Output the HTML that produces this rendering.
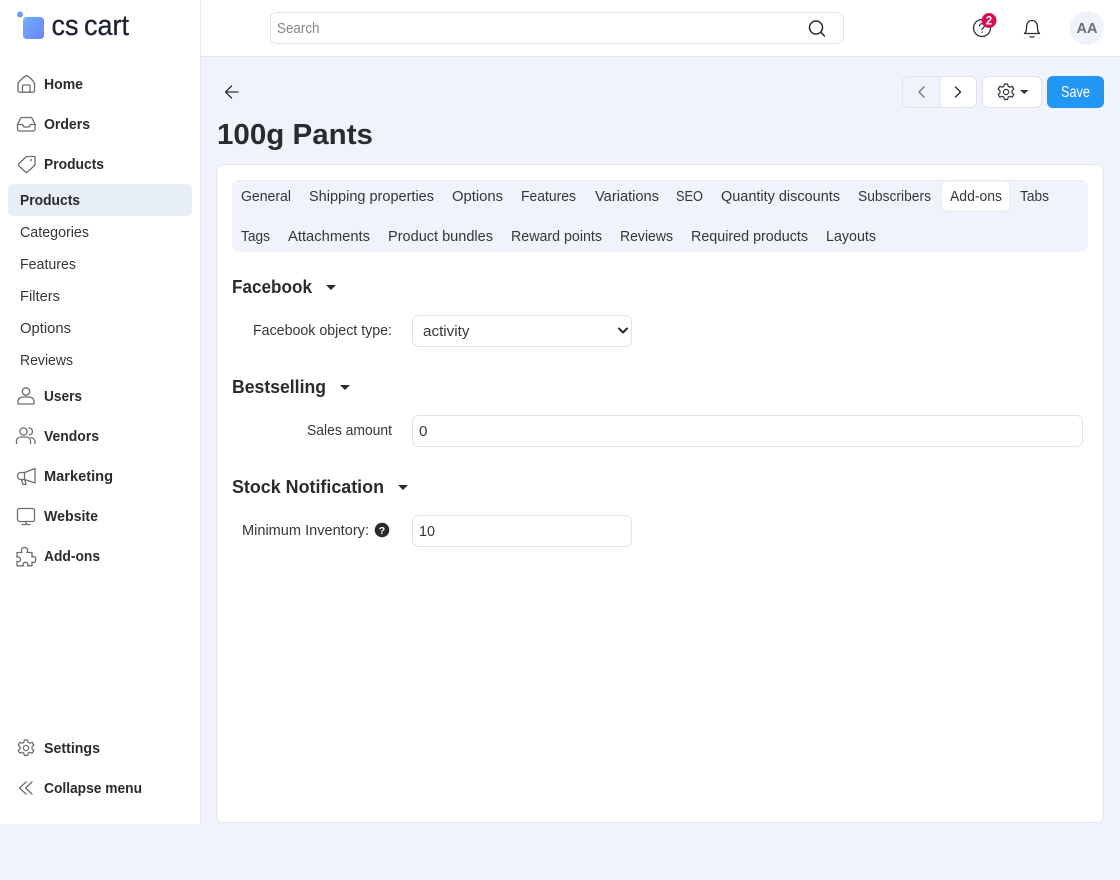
<!DOCTYPE html>
<html lang="en"><head><meta charset="utf-8"><title>100g Pants</title>
<style>
html,body{margin:0;padding:0;width:1120px;height:880px;overflow:hidden;background:#f0f3fb}
svg{display:block;font-family:"Liberation Sans",sans-serif}
.b{font-weight:700;font-size:14.5px;fill:#292b2f}
.r{font-size:14.5px;fill:#33363b}
.h{font-weight:700;font-size:18.5px;fill:#292b2f}
.i{fill:none;stroke:#6b6d70;stroke-width:1.3;stroke-linecap:round;stroke-linejoin:round}
.d{fill:none;stroke:#26282c;stroke-width:1.5;stroke-linecap:round;stroke-linejoin:round}
</style></head><body>
<svg width="1120" height="880" viewBox="0 0 1120 880" xmlns="http://www.w3.org/2000/svg">
<defs><linearGradient id="g" x1="0" y1="0" x2="1" y2="1"><stop offset="0" stop-color="#6fb0fb"/><stop offset="1" stop-color="#6c83fb"/></linearGradient></defs>
<rect width="1120" height="880" fill="#f0f3fb"/>
<!-- sidebar -->
<rect width="200.5" height="824" fill="#fff"/>
<rect x="200" width="1" height="824" fill="#e6e9f0"/>
<!-- top bar -->
<rect x="201" width="919" height="56" fill="#fff"/>
<rect x="201" y="56" width="919" height="1" fill="#e3e6ee"/>
<!-- logo -->
<circle cx="20" cy="14.5" r="3" fill="#6f9cfb"/>
<rect x="23" y="17" width="21" height="22" rx="3.5" fill="url(#g)"/>
<text x="51.500" y="35" font-size="29" fill="#1e2233" stroke="#1e2233" stroke-width=".3" textLength="27" lengthAdjust="spacingAndGlyphs">cs</text>
<text x="84" y="35" font-size="29" fill="#1e2233" stroke="#1e2233" stroke-width=".3" textLength="45" lengthAdjust="spacingAndGlyphs">cart</text>
<!-- sidebar active -->
<rect x="8" y="184" width="184" height="32" rx="6" fill="#e8eef7"/>
<!-- sidebar text -->
<text class="b" x="44" y="89" textLength="39" lengthAdjust="spacingAndGlyphs">Home</text>
<text class="b" x="44" y="129" textLength="46" lengthAdjust="spacingAndGlyphs">Orders</text>
<text class="b" x="44" y="169" textLength="60" lengthAdjust="spacingAndGlyphs">Products</text>
<text class="b" x="20" y="205" textLength="60" lengthAdjust="spacingAndGlyphs">Products</text>
<text class="r" x="20" y="237" textLength="69" lengthAdjust="spacingAndGlyphs">Categories</text>
<text class="r" x="20" y="269" textLength="56" lengthAdjust="spacingAndGlyphs">Features</text>
<text class="r" x="20" y="301" textLength="40" lengthAdjust="spacingAndGlyphs">Filters</text>
<text class="r" x="20" y="333" textLength="51" lengthAdjust="spacingAndGlyphs">Options</text>
<text class="r" x="20" y="365" textLength="53" lengthAdjust="spacingAndGlyphs">Reviews</text>
<text class="b" x="44" y="401" textLength="38" lengthAdjust="spacingAndGlyphs">Users</text>
<text class="b" x="44" y="441" textLength="55" lengthAdjust="spacingAndGlyphs">Vendors</text>
<text class="b" x="44" y="481" textLength="69" lengthAdjust="spacingAndGlyphs">Marketing</text>
<text class="b" x="44" y="521" textLength="54" lengthAdjust="spacingAndGlyphs">Website</text>
<text class="b" x="44" y="561" textLength="56" lengthAdjust="spacingAndGlyphs">Add-ons</text>
<text class="b" x="44" y="753" textLength="56" lengthAdjust="spacingAndGlyphs">Settings</text>
<text class="b" x="44" y="793" textLength="98" lengthAdjust="spacingAndGlyphs">Collapse menu</text>
<!-- sidebar icons -->
<path class="i" d="M18 83.500C19.500 81 23 77 26.500 75.500 30 77 33.500 81 34.500 83.500V90.500a1.700 1.700 0 0 1-1.700 1.700H19.700A1.700 1.700 0 0 1 18 90.500zM22.500 92.200V86a1 1 0 0 1 1-1h5.500a1 1 0 0 1 1 1v6.200"/>
<path class="i" d="M17.500 124.500l3-6.200a1.500 1.500 0 0 1 1.300-.8h9a1.500 1.500 0 0 1 1.300.8l3 6.200v4.500a2 2 0 0 1-2 2H19.500a2 2 0 0 1-2-2zM17.500 124.500H22.500l1.500 2.500h5l1.500-2.500h5"/>
<path class="i" d="M19 163.500L26.500 156.500H34a1 1 0 0 1 1 1V165L27.500 172a1.500 1.500 0 0 1-2 0L19 166a1.700 1.700 0 0 1 0-2.500z"/><circle cx="31" cy="160" r="1" fill="#6b6d70"/>
<circle class="i" cx="26" cy="391.500" r="3.700"/><path class="i" d="M18 404v-2.500c0-3 2.500-4.500 5-4.500h6c2.500 0 5 1.500 5 4.500V404z"/>
<circle class="i" cx="23.500" cy="431.500" r="3.600"/><path class="i" d="M16.500 443.500v-2c0-3 2-4.500 4.500-4.500h5c2.500 0 4.500 1.500 4.500 4.500v2M29 428c2.500.5 3.500 2 3.500 3.500s-1 3-3 3.500M31 437.500c2 .5 4 2 4 4v2"/>
<path class="i" d="M35 468.500V483L24.500 479.500H21a3.500 3.500 0 0 1 0-7h3.500zM24.500 472.500v7M21.500 480l1.500 4.500h3l-1-4"/>
<rect class="i" x="17.500" y="508.500" width="17" height="13" rx="2"/><path class="i" d="M26 521.500v3M22 524.500h8"/>
<path class="i" d="M17 552.500h5c-1.500-3 0-5 2.500-5s4 2 2.500 5h5v4.500c2-1.200 3.800 0 3.800 2.500s-1.800 3.700-3.800 2.500v3.800h-4.500c1-2.500-.5-3.500-2-3.500s-3 1-2 3.500H17v-4.500c2.500 1 3.500-.5 3.500-2s-1-3-3.500-2z"/>
<circle class="i" cx="26" cy="748" r="2.600"/><path class="i" d="M24.400 740h3.200l.6 2.400 1.700.8 2.300-.9 1.600 2.800-1.800 1.600v2.100l1.800 1.600-1.600 2.800-2.300-.9-1.700.8-.6 2.400h-3.200l-.6-2.400-1.700-.8-2.300.9-1.600-2.800 1.800-1.600v-2.100l-1.800-1.600 1.600-2.800 2.300.9 1.700-.8z"/>
<path class="i" d="M26 782l-6.500 6 6.500 6M32 782l-6.500 6 6.500 6"/>
<!-- search -->
<rect x="270.500" y="12.500" width="573" height="31" rx="6" fill="#fff" stroke="#e2e5ea"/>
<text x="277" y="33" font-size="14.5" fill="#85888c" textLength="42.500" lengthAdjust="spacingAndGlyphs">Search</text>
<circle class="d" cx="816" cy="27.500" r="6.500"/><path class="d" d="M821 32.500l3.500 3.500"/>
<!-- header right -->
<circle class="d" cx="982" cy="28" r="8.500" style="stroke:#34363a;stroke-width:1.300"/>
<path class="d" d="M979.500 26c0-3 5-3 5 0 0 1.600-2.500 1.800-2.500 3.500M982 32v.300" style="stroke:#34363a;stroke-width:1.300"/>
<circle cx="989" cy="20.500" r="7.500" fill="#d90b57"/>
<text x="989" y="24.500" text-anchor="middle" font-size="11.500" font-weight="700" fill="#fff">2</text>
<path class="d" d="M1024.500 33.500c1.500-1.500 2-2.500 2-6 0-4 2-7 5.500-7s5.500 3 5.500 7c0 3.500.5 4.500 2 6zM1030 36.500c1 .8 3 .8 4 0" style="stroke:#2a2c30;stroke-width:1.300"/>
<circle cx="1087" cy="28" r="17" fill="#f0f3fb"/>
<text x="1087" y="33" text-anchor="middle" font-size="14.500" font-weight="700" fill="#6c6f73" textLength="21" lengthAdjust="spacingAndGlyphs">AA</text>
<!-- back arrow -->
<path d="M238 92h-12.500M231.500 86l-6 6 6 6" fill="none" stroke="#2c2e32" stroke-width="1.300" stroke-linecap="round" stroke-linejoin="round"/>
<!-- title -->
<text x="217" y="144" font-size="29" font-weight="700" fill="#292b2f" textLength="156" lengthAdjust="spacingAndGlyphs">100g Pants</text>
<!-- toolbar -->
<path d="M940 76.500h-32a5.500 5.500 0 0 0-5.500 5.500v20a5.500 5.500 0 0 0 5.500 5.500h32z" fill="#f0f3fb" stroke="#e0e3ea"/>
<path d="M940 76.500h31a5.500 5.500 0 0 1 5.500 5.500v20a5.500 5.500 0 0 1-5.500 5.500h-31z" fill="#fff" stroke="#e0e3ea"/>
<path d="M924 87l-5 5 5 5" fill="none" stroke="#75787c" stroke-width="1.400" stroke-linecap="round" stroke-linejoin="round"/>
<path d="M955.500 87l5 5-5 5" fill="none" stroke="#2a2c30" stroke-width="1.400" stroke-linecap="round" stroke-linejoin="round"/>
<rect x="982.500" y="76.500" width="59" height="31" rx="6" fill="#fff" stroke="#e0e3ea"/>
<g transform="translate(-20 -656)"><circle cx="1026" cy="748" r="2.600" fill="none" stroke="#303236" stroke-width="1.200"/><path d="M1024.400 740h3.200l.6 2.400 1.700.8 2.300-.9 1.600 2.800-1.800 1.600v2.100l1.800 1.600-1.600 2.800-2.300-.9-1.700.8-.6 2.400h-3.200l-.6-2.400-1.700-.8-2.300.9-1.600-2.800 1.800-1.600v-2.100l-1.800-1.600 1.600-2.800 2.300.9 1.700-.8z" fill="none" stroke="#303236" stroke-width="1.200" stroke-linejoin="round"/></g>
<path d="M1020 90h8.500l-4.250 4z" fill="#303236"/>
<rect x="1047" y="76" width="57" height="32" rx="6" fill="#2196f3"/>
<text x="1061" y="97" font-size="15.500" fill="#fff" textLength="29" lengthAdjust="spacingAndGlyphs">Save</text>
<!-- card -->
<rect x="216.500" y="164.500" width="887" height="658" rx="6" fill="#fff" stroke="#e3e6ec"/>
<!-- tabs -->
<rect x="232" y="180" width="856" height="72" rx="6" fill="#f0f3fa"/>
<rect x="238" y="180" width="844" height="1" fill="#e6e9f0"/>
<rect x="941" y="181" width="69" height="30" rx="6" fill="#fff" stroke="#e6e9ef"/>
<text class="r" x="241" y="201" textLength="50" lengthAdjust="spacingAndGlyphs">General</text>
<text class="r" x="309" y="201" textLength="125" lengthAdjust="spacingAndGlyphs">Shipping properties</text>
<text class="r" x="452" y="201" textLength="51" lengthAdjust="spacingAndGlyphs">Options</text>
<text class="r" x="521" y="201" textLength="55" lengthAdjust="spacingAndGlyphs">Features</text>
<text class="r" x="595" y="201" textLength="64" lengthAdjust="spacingAndGlyphs">Variations</text>
<text class="r" x="676" y="201" textLength="27" lengthAdjust="spacingAndGlyphs">SEO</text>
<text class="r" x="721" y="201" textLength="119" lengthAdjust="spacingAndGlyphs">Quantity discounts</text>
<text class="r" x="858" y="201" textLength="73" lengthAdjust="spacingAndGlyphs">Subscribers</text>
<text class="r" x="950" y="201" textLength="52" lengthAdjust="spacingAndGlyphs">Add-ons</text>
<text class="r" x="1020" y="201" textLength="29" lengthAdjust="spacingAndGlyphs">Tabs</text>
<text class="r" x="241" y="241" textLength="29" lengthAdjust="spacingAndGlyphs">Tags</text>
<text class="r" x="288" y="241" textLength="82" lengthAdjust="spacingAndGlyphs">Attachments</text>
<text class="r" x="388" y="241" textLength="105" lengthAdjust="spacingAndGlyphs">Product bundles</text>
<text class="r" x="511" y="241" textLength="91" lengthAdjust="spacingAndGlyphs">Reward points</text>
<text class="r" x="620" y="241" textLength="53" lengthAdjust="spacingAndGlyphs">Reviews</text>
<text class="r" x="691" y="241" textLength="117" lengthAdjust="spacingAndGlyphs">Required products</text>
<text class="r" x="826" y="241" textLength="50" lengthAdjust="spacingAndGlyphs">Layouts</text>
<!-- sections -->
<text class="h" x="232" y="293" textLength="80" lengthAdjust="spacingAndGlyphs">Facebook</text>
<path d="M326 285h10l-5 5z" fill="#292b2f"/>
<text class="r" x="253" y="335" textLength="139" lengthAdjust="spacingAndGlyphs">Facebook object type:</text>
<rect x="412.500" y="315.500" width="219" height="31" rx="6" fill="#fff" stroke="#e0e3ea"/>
<text class="r" x="423" y="336" textLength="46.500" lengthAdjust="spacingAndGlyphs">activity</text>
<path d="M619 328.500l4 4 4-4" fill="none" stroke="#26282c" stroke-width="2" stroke-linecap="round" stroke-linejoin="round"/>
<text class="h" x="232" y="393" textLength="94" lengthAdjust="spacingAndGlyphs">Bestselling</text>
<path d="M340 385h10l-5 5z" fill="#292b2f"/>
<text class="r" x="307" y="435" textLength="85" lengthAdjust="spacingAndGlyphs">Sales amount</text>
<rect x="412.500" y="415.500" width="670" height="31" rx="6" fill="#fff" stroke="#e0e3ea"/>
<text class="r" x="419" y="436" textLength="8.500" lengthAdjust="spacingAndGlyphs">0</text>
<text class="h" x="232" y="493" textLength="152" lengthAdjust="spacingAndGlyphs">Stock Notification</text>
<path d="M398 485h10l-5 5z" fill="#292b2f"/>
<text class="r" x="242" y="535" textLength="127" lengthAdjust="spacingAndGlyphs">Minimum Inventory:</text>
<circle cx="382" cy="530" r="7.300" fill="#292b2f"/>
<text x="382" y="534" text-anchor="middle" font-size="10.500" font-weight="700" fill="#fff">?</text>
<rect x="412.500" y="515.500" width="219" height="31" rx="6" fill="#fff" stroke="#e0e3ea"/>
<text class="r" x="419" y="536" textLength="16" lengthAdjust="spacingAndGlyphs">10</text>
</svg>
</body></html>
